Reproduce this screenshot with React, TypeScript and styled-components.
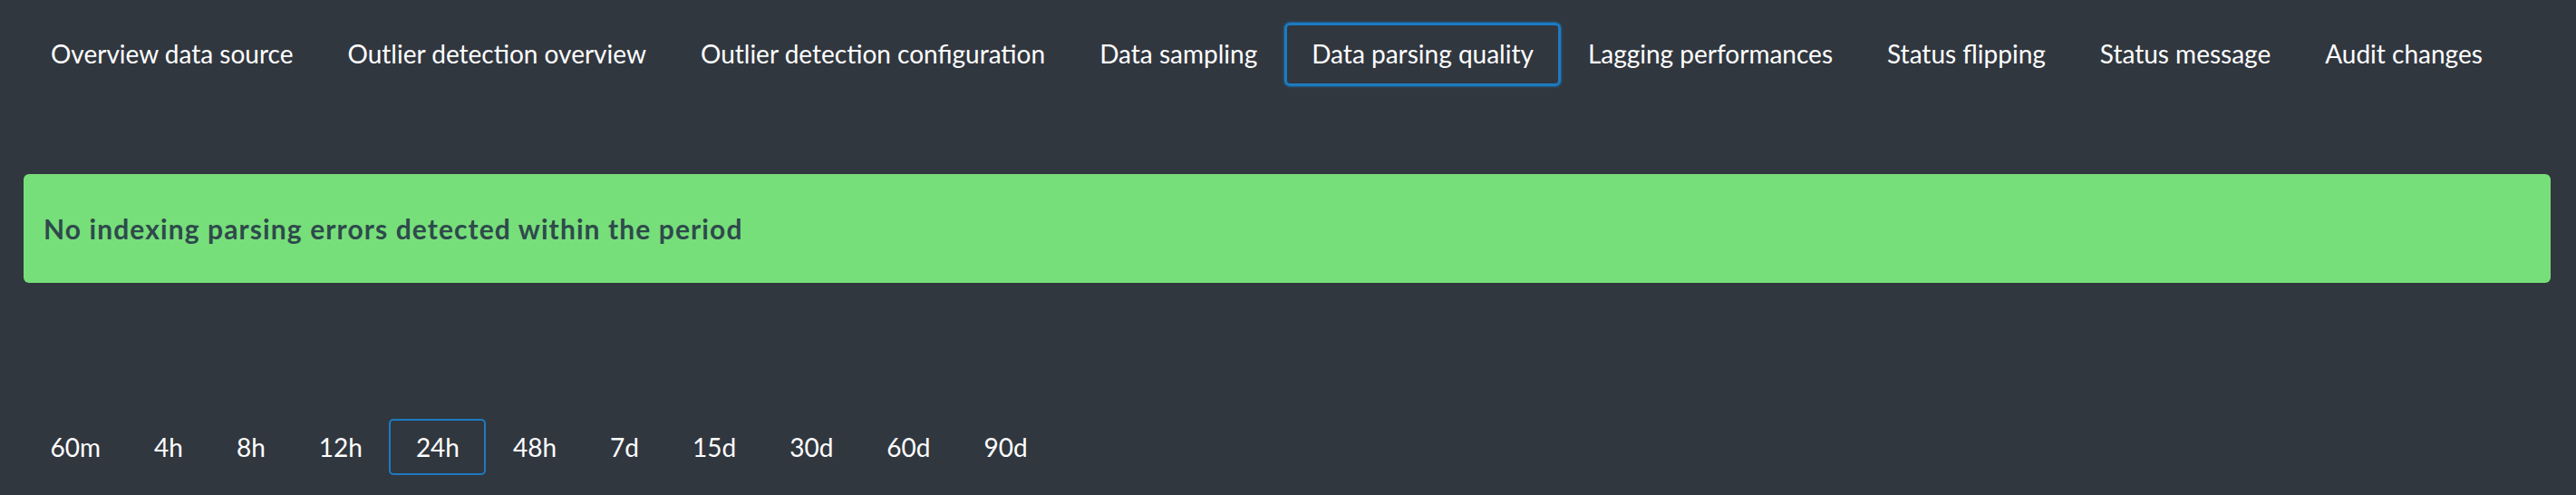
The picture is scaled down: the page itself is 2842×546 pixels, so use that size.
import React, { useState } from 'react';
import styled, { createGlobalStyle } from 'styled-components';

// --- Global ---
const GlobalStyle = createGlobalStyle`
  html, body {
    margin: 0;
    padding: 0;
    background-color: #31373f;
  }
  body {
    font-family: Lato, "Open Sans", "Liberation Sans", sans-serif;
    color: #ffffff;
  }
`;

// --- Layout ---
const Page = styled.div`
  display: flex;
  flex-direction: column;
  padding: 25px 28px 0 26px;
  min-height: 546px;
  box-sizing: border-box;
`;

const TabBar = styled.nav`
  display: flex;
  align-items: center;
`;

const Tab = styled.button<{ $active?: boolean }>`
  height: 70px;
  box-sizing: border-box;
  padding: 0 27px 2px;
  background: transparent;
  border: 3px solid ${(p) => (p.$active ? '#1b7bc2' : 'transparent')};
  border-radius: 6px;
  box-shadow: ${(p) => (p.$active ? '0 0 2px 1px rgba(27, 123, 194, 0.6)' : 'none')};
  color: #ffffff;
  font-family: inherit;
  font-size: 28px;
  font-weight: 400;
  white-space: nowrap;
  cursor: pointer;
`;

const Banner = styled.div`
  margin-top: 97px;
  height: 120px;
  display: flex;
  align-items: center;
  padding: 0 22px;
  background-color: #77df7a;
  border-radius: 6px;
  color: #2e4a4b;
  font-size: 30px;
  font-weight: 700;
  letter-spacing: 1.1px;
`;

const RangeBar = styled.div`
  display: flex;
  align-items: center;
  margin-top: 150px;
`;

const RangeButton = styled.button<{ $active?: boolean }>`
  height: 62px;
  box-sizing: border-box;
  padding: 0 27.5px;
  background: transparent;
  border: 2px solid ${(p) => (p.$active ? '#1b7bc2' : 'transparent')};
  border-radius: 5px;
  color: #ffffff;
  font-family: inherit;
  font-size: 28px;
  cursor: pointer;
`;

const tabs = [
  'Overview data source',
  'Outlier detection overview',
  'Outlier detection configuration',
  'Data sampling',
  'Data parsing quality',
  'Lagging performances',
  'Status flipping',
  'Status message',
  'Audit changes',
];

const ranges = ['60m', '4h', '8h', '12h', '24h', '48h', '7d', '15d', '30d', '60d', '90d'];

const App: React.FC = () => {
  const [tab, setTab] = useState('Data parsing quality');
  const [range, setRange] = useState('24h');

  return (
    <>
      <GlobalStyle />
      <Page>
        <TabBar>
          {tabs.map((t) => (
            <Tab key={t} $active={t === tab} onClick={() => setTab(t)}>
              {t}
            </Tab>
          ))}
        </TabBar>
        <Banner>No indexing parsing errors detected within the period</Banner>
        <RangeBar>
          {ranges.map((r) => (
            <RangeButton key={r} $active={r === range} onClick={() => setRange(r)}>
              {r}
            </RangeButton>
          ))}
        </RangeBar>
      </Page>
    </>
  );
};

export default App;
